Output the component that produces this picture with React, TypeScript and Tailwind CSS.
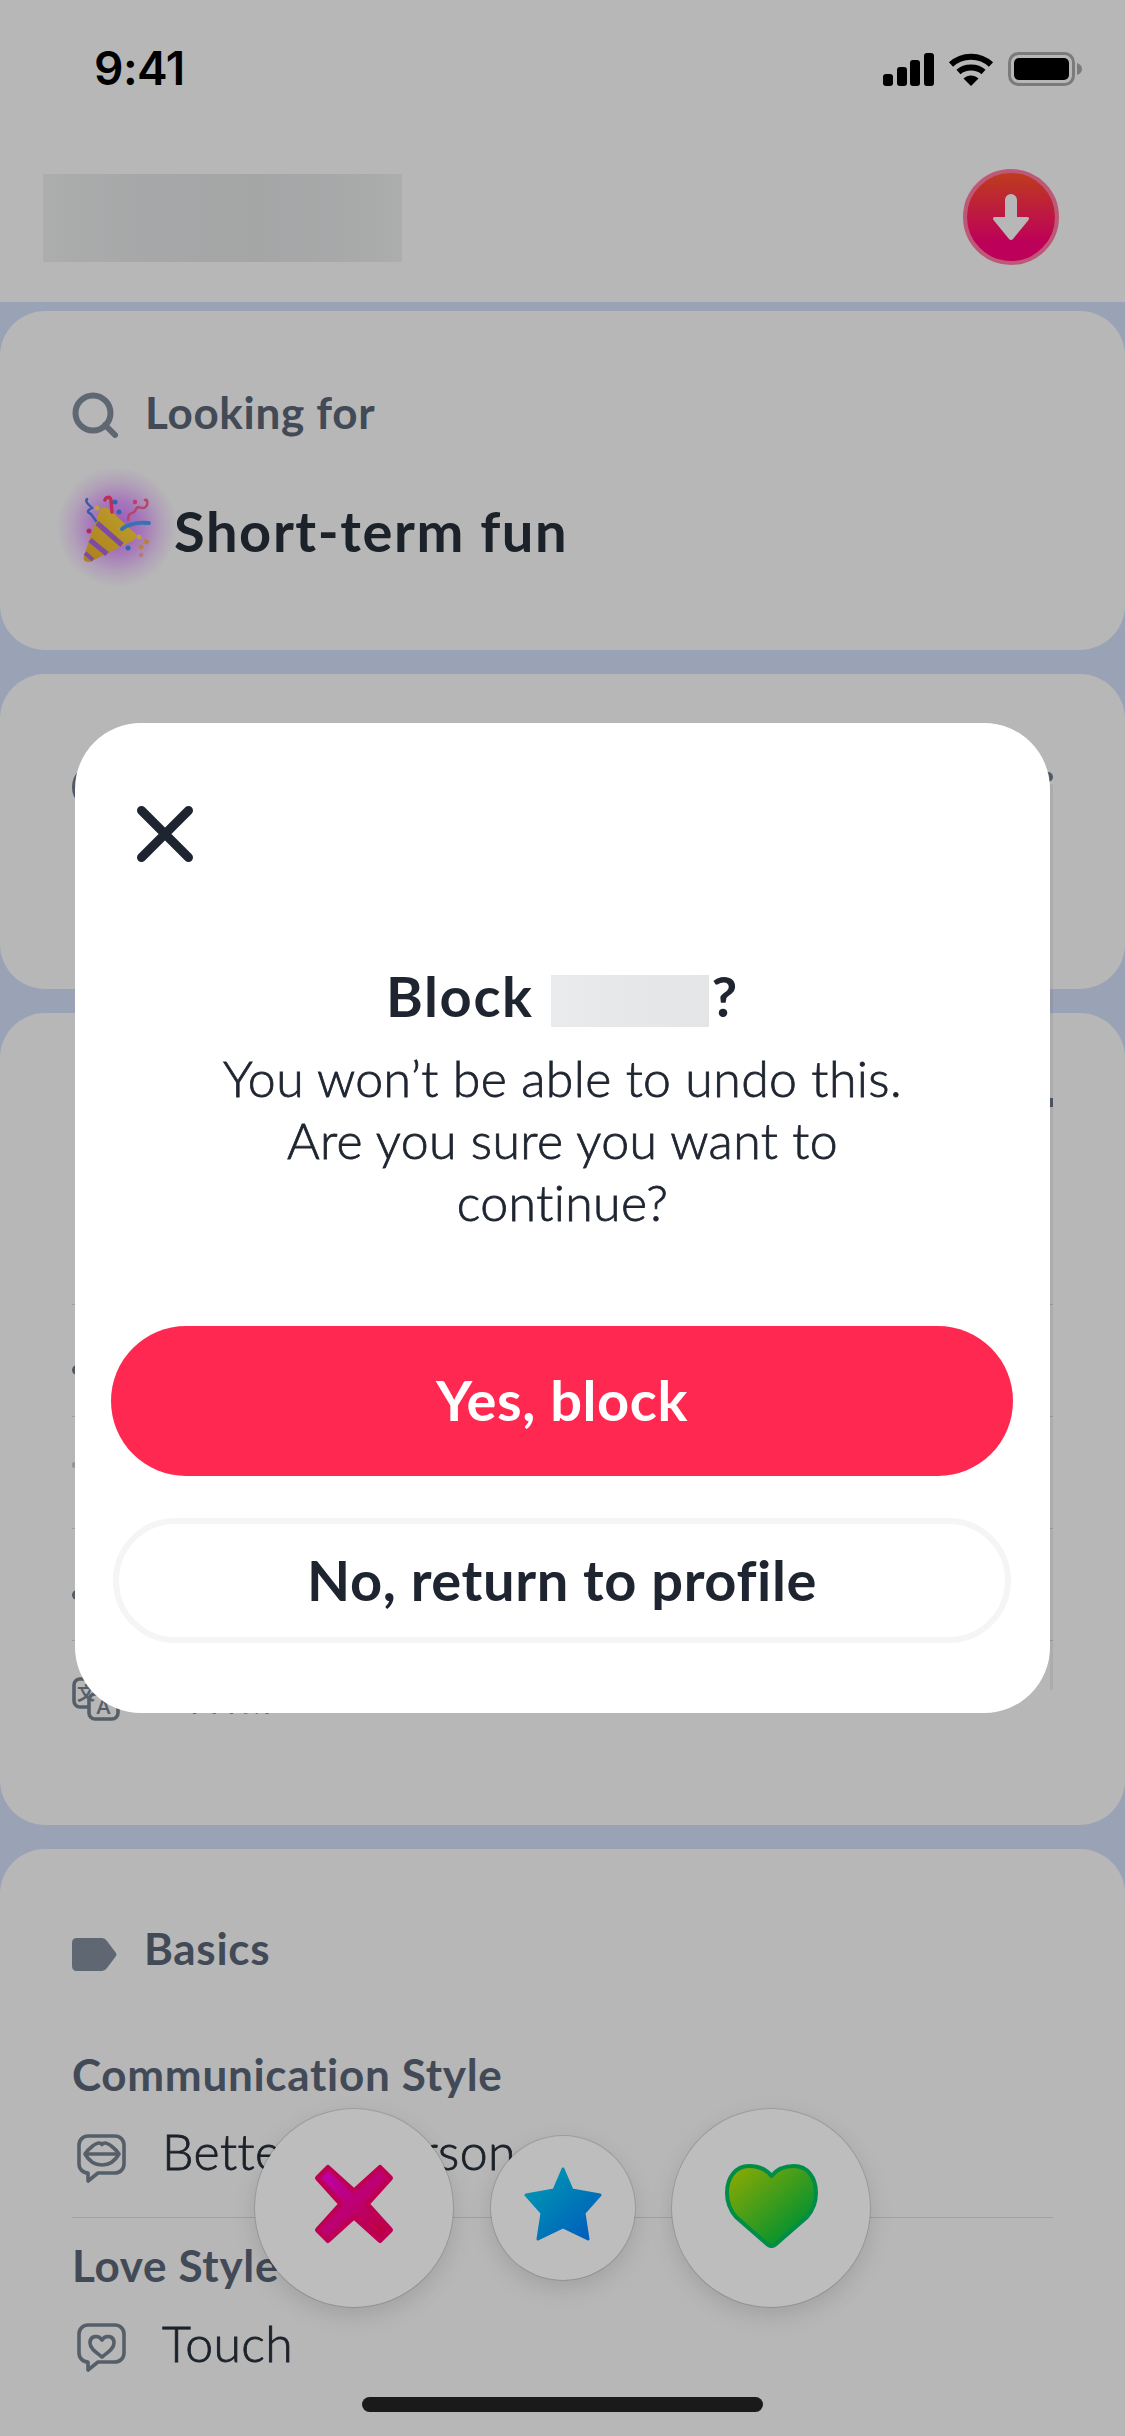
import React from "react";

const font = { fontFamily: "Lato, 'Noto Sans', sans-serif" };

function SignalIcon() {
  return (
    <svg width="51" height="33" viewBox="0 0 51 33">
      <rect x="0" y="21" width="10" height="12" rx="3" fill="#000" />
      <rect x="14" y="14" width="10" height="19" rx="3" fill="#000" />
      <rect x="27" y="7" width="10" height="26" rx="3" fill="#000" />
      <rect x="41" y="0" width="10" height="33" rx="3" fill="#000" />
    </svg>
  );
}

function WifiIcon() {
  return (
    <svg width="46" height="33" viewBox="0 0 46 33" fill="none" stroke="#000" strokeWidth="6">
      <path d="M3 11.5 C14 1 32 1 43 11.5" />
      <path d="M10.5 19 C17 13 29 13 35.5 19" />
      <path d="M23 33 L15.5 25.5 C20 21.5 26 21.5 30.5 25.5 Z" fill="#000" stroke="none" />
    </svg>
  );
}

function BatteryIcon() {
  return (
    <svg width="74" height="34" viewBox="0 0 74 34">
      <rect x="1.5" y="1.5" width="64" height="31" rx="9" fill="none" stroke="#a6a6a6" strokeWidth="3" />
      <rect x="6" y="6" width="55" height="22" rx="5" fill="#000" />
      <path d="M69 11 C72 12 74 14 74 17 C74 20 72 22 69 23 Z" fill="#a6a6a6" />
    </svg>
  );
}

function StatusBar() {
  return (
    <div className="flex h-[86px] items-end justify-between pl-[94px] pr-[43px]">
      <span className="text-[46px] leading-[36px] font-semibold text-black" style={{ fontFamily: "Inter, sans-serif", letterSpacing: "-0.5px" }}>
        9:41
      </span>
      <div className="flex items-center gap-[14px]">
        <SignalIcon />
        <WifiIcon />
        <BatteryIcon />
      </div>
    </div>
  );
}

function SearchIcon() {
  return (
    <svg width="46" height="46" viewBox="0 0 46 46" fill="none" stroke="#808c9a" strokeWidth="6" strokeLinecap="round" className="shrink-0">
      <circle cx="21" cy="21" r="17.5" />
      <path d="M33 33 L43 43" />
    </svg>
  );
}

function TagIcon() {
  return (
    <svg width="45" height="33" viewBox="0 0 45 33" className="shrink-0">
      <path d="M5 0 H30 Q33 0 35 3 L44 15 Q45 16.5 44 18 L35 30 Q33 33 30 33 H5 Q0 33 0 28 V5 Q0 0 5 0 Z" fill="#808c9a" />
    </svg>
  );
}

const bubble = "M11 2 H38 a9 9 0 0 1 9 9 V30 a9 9 0 0 1 -9 9 H21 L11 47 V39 a9 9 0 0 1 -9 -9 V11 a9 9 0 0 1 9 -9 Z";

function LipsBubbleIcon() {
  return (
    <svg width="49" height="50" viewBox="0 0 49 50" fill="none" stroke="#74818e" strokeWidth="3.6" strokeLinejoin="round" className="mt-[14px] shrink-0">
      <path d={bubble} />
      <path d="M8 20 C12 14 19 9 22 9 C24 9 25 10.5 25 10.5 C25 10.5 26 9 28 9 C31 9 38 14 42 20 C38 27 32 31 25 31 C18 31 12 27 8 20 Z" />
      <path d="M8 20 H42" />
    </svg>
  );
}

function HeartBubbleIcon() {
  return (
    <svg width="49" height="50" viewBox="0 0 49 50" fill="none" stroke="#74818e" strokeWidth="3.6" strokeLinejoin="round" className="mt-[11px] shrink-0">
      <path d={bubble} />
      <path d="M25 17 C22 12 13 12 13 20 C13 26 20 30 25 34 C30 30 37 26 37 20 C37 12 28 12 25 17 Z" />
    </svg>
  );
}

function TranslateIcon() {
  return (
    <svg width="48" height="44" viewBox="0 0 48 44" fill="none" className="shrink-0">
      <rect x="2" y="2" width="24" height="28" rx="6" stroke="#74818e" strokeWidth="3.6" />
      <rect x="17" y="17" width="29" height="25" rx="6" fill="#f7f7f7" stroke="#74818e" strokeWidth="3.6" />
      <text x="14" y="23" textAnchor="middle" fontSize="18" fontWeight="700" fill="#74818e" fontFamily="'Noto Sans CJK SC', sans-serif">文</text>
      <text x="31.5" y="37" textAnchor="middle" fontSize="20" fontWeight="700" fill="#74818e" fontFamily="Lato, sans-serif">A</text>
    </svg>
  );
}

// party popper with its purple glow, 124 box
function PartyPopper() {
  return (
    <svg width="124" height="124" viewBox="55 465 124 124" className="-ml-[17px] shrink-0">
      <defs>
        <radialGradient id="glow" cx="0.5" cy="0.5" r="0.5">
          <stop offset="0" stopColor="#d060ff" stopOpacity="0.9" />
          <stop offset="0.4" stopColor="#d060ff" stopOpacity="0.6" />
          <stop offset="0.75" stopColor="#d060ff" stopOpacity="0.2" />
          <stop offset="1" stopColor="#d060ff" stopOpacity="0" />
        </radialGradient>
        <linearGradient id="cone" x1="0" y1="1" x2="1" y2="0">
          <stop offset="0" stopColor="#e8ac2a" />
          <stop offset="1" stopColor="#ffd83a" />
        </linearGradient>
      </defs>
      <circle cx="117" cy="527" r="60" fill="url(#glow)" />
      <path d="M84 556 L100 509 Q105 505 110 510 L136 534 Q138 538 132 541 L90 562 Q82 562 84 556 Z" fill="url(#cone)" />
      <path d="M97 523 L122 545 M90 540 L107 554" stroke="#a966d8" strokeWidth="5" fill="none" />
      <path d="M85 553 L93 560" stroke="#a966d8" strokeWidth="4" fill="none" />
      <path d="M122 529 C128 524 138 522 149 523" stroke="#4b9cf0" strokeWidth="4" fill="none" strokeLinecap="round" />
      <path d="M112 512 L111 500 C110 496 106 497 105 500" stroke="#ff3f78" strokeWidth="3.5" fill="none" strokeLinecap="round" />
      <path d="M128 520 C128 510 134 516 136 509 C138 504 144 512 147 505 C148 500 146 499 145 500" stroke="#f0608c" strokeWidth="2.5" fill="none" strokeLinecap="round" />
      <path d="M87 499 C84 503 90 505 92 508 C88 510 86 512 91 514 C92 516 94 518 96 521" stroke="#4a7ee8" strokeWidth="2.5" fill="none" strokeLinecap="round" />
      <circle cx="97" cy="508" r="2.5" fill="#ffd84c" />
      <circle cx="115" cy="502" r="2.5" fill="#3d8cf0" />
      <circle cx="119" cy="512" r="2.5" fill="#3d8cf0" />
      <circle cx="135" cy="502" r="2.2" fill="#f8558a" />
      <circle cx="89" cy="531" r="2.5" fill="#f03a75" />
      <circle cx="139" cy="537" r="2.5" fill="#ffd84c" />
      <rect x="144" y="539" width="5" height="5" fill="#f8ac60" transform="rotate(20 146 541)" />
      <circle cx="128" cy="548" r="2.5" fill="#3d8cf0" />
      <circle cx="141" cy="547" r="2.5" fill="#f8ac60" />
      <rect x="139" y="553" width="4" height="4" fill="#ff9ab4" transform="rotate(20 141 555)" />
    </svg>
  );
}

function Label({ children, className = "" }: { children: React.ReactNode; className?: string }) {
  return <div className={"text-[44px] leading-[52px] font-bold tracking-[0.7px] text-[#586474] " + className}>{children}</div>;
}

function Value({ children }: { children: React.ReactNode }) {
  return <span className="text-[50px] leading-[62px] font-light tracking-[0.4px] whitespace-nowrap text-[#262e39] [-webkit-text-stroke:0.8px_#262e39]">{children}</span>;
}

function ActionButtons() {
  const round = "absolute flex items-center justify-center rounded-full bg-white shadow-[0_0_0_1px_rgba(0,0,0,0.12),0_8px_24px_rgba(0,0,0,0.12)]";
  return (
    <>
      <button className={round + " left-[255px] top-[2109px] h-[198px] w-[198px] pb-[8px]"}>
        <svg width="80" height="80" viewBox="0 0 80 80">
          <defs>
            <linearGradient id="nope" x1="0" y1="0" x2="1" y2="1">
              <stop offset="0" stopColor="#ff00f0" />
              <stop offset="1" stopColor="#ff0044" />
            </linearGradient>
          </defs>
          <path d="M14 3.5 L40 27 L66 3.5 L76.5 14 L53 40 L76.5 66 L66 76.5 L40 53 L14 76.5 L3.5 66 L27 40 L3.5 14 Z" fill="url(#nope)" stroke="#ff0070" strokeWidth="5" strokeLinejoin="round" />
        </svg>
      </button>
      <button className={round + " left-[491px] top-[2136px] h-[144px] w-[144px] pb-[8px]"}>
        <svg width="78" height="74" viewBox="0 0 78 74">
          <defs>
            <linearGradient id="super" x1="0" y1="0" x2="1" y2="1">
              <stop offset="0" stopColor="#00d6f0" />
              <stop offset="1" stopColor="#0078ff" />
            </linearGradient>
          </defs>
          <path d="M39 2 L48 23 L76 28 L60 46 L64 72 L39 60 L14 72 L18 46 L2 28 L30 23 Z" fill="url(#super)" stroke="url(#super)" strokeWidth="3" strokeLinejoin="round" />
        </svg>
      </button>
      <button className={round + " left-[672px] top-[2109px] h-[198px] w-[198px] pb-[5px]"}>
        <svg width="93" height="84" viewBox="0 0 93 84">
          <defs>
            <linearGradient id="like" x1="0" y1="0" x2="1" y2="1">
              <stop offset="0" stopColor="#c9e600" />
              <stop offset="0.75" stopColor="#12c83c" />
              <stop offset="1" stopColor="#00c050" />
            </linearGradient>
          </defs>
          <path
            d="M46.5 12 C41 5 33 2 24 2 C11 2 2 13 2 29 C2 38 5 46 11 53 L42 80 Q46.5 84 51 80 L82 53 C88 46 91 38 91 29 C91 13 82 2 69 2 C60 2 52 5 46.5 12 Z"
            fill="url(#like)"
            stroke="#00bf60"
            strokeWidth="4"
            strokeLinejoin="round"
          />
        </svg>
      </button>
    </>
  );
}

function BlockDialog() {
  return (
    <div className="absolute left-[75px] top-[723px] flex h-[990px] w-[975px] flex-col rounded-[66px] bg-white pt-[83px] text-[#1e2530]">
      <button className="ml-[62px] self-start">
        <svg width="56" height="56" viewBox="0 0 56 56" fill="none" stroke="#1e2530" strokeWidth="9" strokeLinecap="round" className="block">
          <path d="M4.5 4.5 L51.5 51.5 M51.5 4.5 L4.5 51.5" />
        </svg>
      </button>
      <div className="mt-[113px] flex h-[52px] items-start justify-center text-[56px] leading-[42px] font-bold tracking-[1.6px]">
        <span>Block</span>
        <span className="ml-[17px] mr-[3px] h-[52px] w-[158px] bg-[linear-gradient(90deg,#e9ebec,#e6e8e9_40%,#e3e5e6)]" />
        <span>?</span>
      </div>
      <p className="mt-[20px] text-center text-[50px] leading-[62px] font-light tracking-[0.4px] [-webkit-text-stroke:0.8px_#1e2530]">
        You won’t be able to undo this.
        <br />
        Are you sure you want to
        <br />
        continue?
      </p>
      <div className="mt-[93px] flex flex-col px-[36px]">
        <button className="h-[150px] w-[902px] rounded-full bg-[#ff2851] pb-[2px] text-[56px] font-bold tracking-[0.6px] text-white">Yes, block</button>
        <button className="mx-[2px] mt-[42px] h-[125px] w-[898px] rounded-full border-[6px] border-[#f5f5f6] pb-[2px] text-[56px] font-bold tracking-[0.6px]">No, return to profile</button>
      </div>
    </div>
  );
}

export default function App() {
  return (
    <div className="relative h-[2436px] w-[1125px] overflow-hidden bg-[#d0dbf5]" style={font}>
      <header className="h-[302px] bg-[#f7f7f7]">
        <StatusBar />
        <div className="mt-[83px] flex items-start justify-between pl-[43px] pr-[66px]">
          <div className="mt-[5px] h-[88px] w-[359px] bg-[linear-gradient(90deg,#e8eaea,#e0e2e3_30%,#dee0e1_60%,#e4e6e6_90%,#e9ebeb)]" />
          <div className="flex h-[96px] w-[96px] items-center justify-center rounded-full border-[4px] border-[#ff78a0] bg-[linear-gradient(180deg,#ff5128,#ff007a_80%)]">
            <svg width="38" height="48" viewBox="0 0 38 48">
              <path d="M13 7 a6 6 0 0 1 12 0 V24 H35 Q38 24 36.5 27 L21 46 Q19 48 17 46 L1.5 27 Q0 24 3 24 H13 Z" fill="#f7f7f7" />
            </svg>
          </div>
        </div>
      </header>

      <div className="mt-[9px] flex flex-col gap-[24px]">
        <section className="h-[339px] rounded-[45px] bg-[#f7f7f7] px-[72px] pt-[81px]">
          <div className="flex h-[46px] items-start gap-[27px]">
            <SearchIcon />
            <Label className="-mt-[6px]">Looking for</Label>
          </div>
          <div className="mt-[27px] flex h-[124px] items-start">
            <PartyPopper />
            <span className="-ml-[5px] mt-[35px] text-[56px] leading-[62px] font-bold tracking-[1.6px] text-[#262e39]">Short-term fun</span>
          </div>
        </section>

        <section className="flex h-[315px] items-start justify-between rounded-[45px] bg-[#f7f7f7] px-[72px] pt-[90px]">
          <span className="h-[46px] w-[46px] rounded-full border-[6px] border-[#6c7a87]" />
          <span className="mt-[8px] h-[10px] w-[10px] rounded-full bg-[#6c7a87]" />
        </section>

        <section className="h-[812px] rounded-[45px] bg-[#f7f7f7] px-[72px]">
          <div className="flex h-[292px] justify-end border-b border-[#d8d8d8] pt-[85px]">
            <span className="h-[9px] w-[3px] bg-[#6c7a87]" />
          </div>
          <div className="h-[112px] border-b border-[#d8d8d8] pt-[60px]">
            <span className="block h-[10px] w-[10px] rounded-full bg-[#6c7a87]" />
          </div>
          <div className="h-[112px] border-b border-[#d8d8d8] pt-[45px]">
            <span className="block h-[6px] w-[4px] rounded-full bg-[#c4cad0]" />
          </div>
          <div className="h-[112px] border-b border-[#d8d8d8] pt-[61px]">
            <span className="block h-[10px] w-[10px] rounded-full bg-[#6c7a87]" />
          </div>
          <div className="flex items-start pt-[22px]">
            <div className="mt-[14px]">
              <TranslateIcon />
            </div>
            <div className="ml-[60px]">
              <Value>Thai</Value>
            </div>
          </div>
        </section>

        <section className="h-[640px] rounded-[45px] bg-[#f7f7f7] px-[72px] pt-[89px]">
          <div className="flex h-[33px] items-start gap-[27px]">
            <TagIcon />
            <Label className="-mt-[16px]">Basics</Label>
          </div>
          <Label className="mt-[77px]">Communication Style</Label>
          <div className="mt-[20px] flex h-[64px] items-start gap-[36px] pl-[5px]">
            <LipsBubbleIcon />
            <Value>Better in person</Value>
          </div>
          <div className="mt-[33px] h-px bg-[#d8d8d8]" />
          <Label className="mt-[21px]">Love Style</Label>
          <div className="mt-[21px] flex h-[62px] items-start gap-[36px] pl-[5px]">
            <HeartBubbleIcon />
            <Value>Touch</Value>
          </div>
        </section>
      </div>

      <ActionButtons />
      <div className="absolute left-[362px] top-[2397px] h-[15px] w-[401px] rounded-full bg-[#242424]" />

      {/* dimmed backdrop */}
      <div className="absolute inset-0 bg-black/[.26]" />
      <div className="absolute left-[1050px] top-[784px] h-[906px] w-[3px] bg-black/[.06]" />
      <BlockDialog />
    </div>
  );
}
